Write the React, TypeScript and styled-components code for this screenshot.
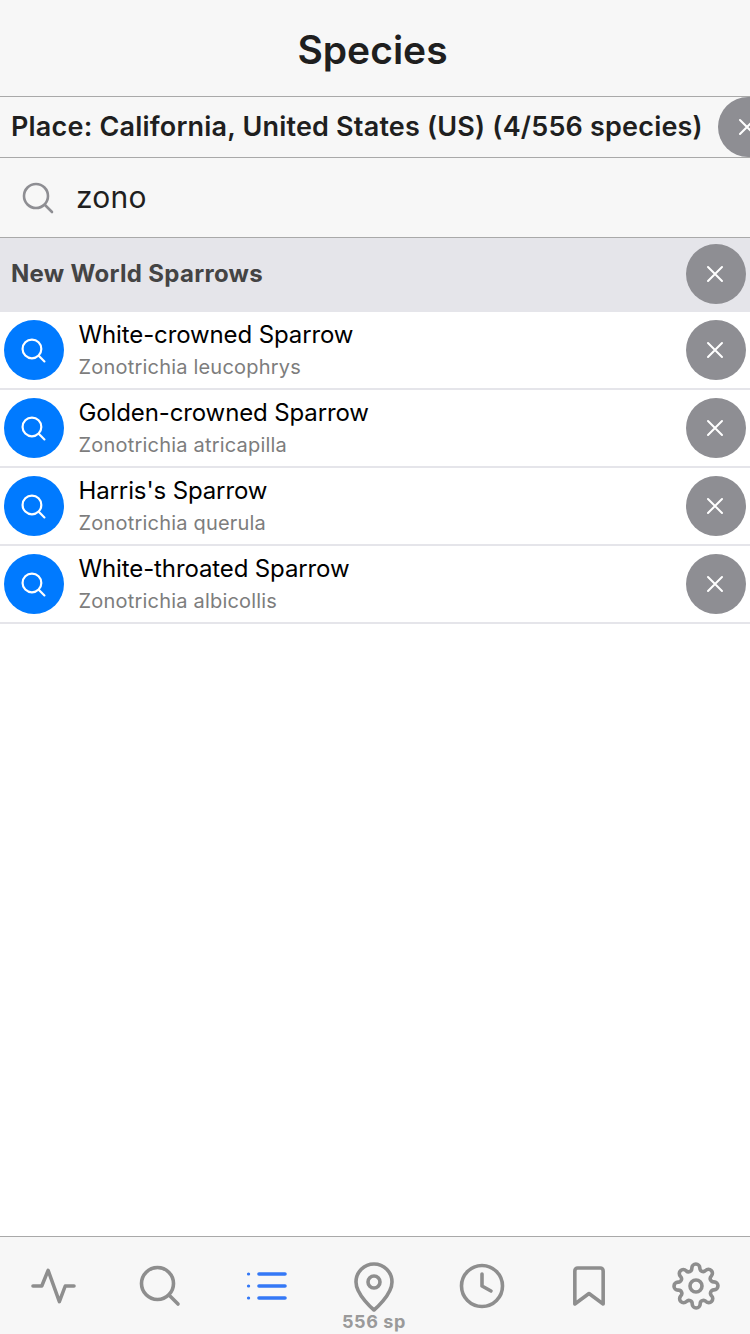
import React from "react";
import styled, { createGlobalStyle } from "styled-components";

const species = [
  { name: "White-crowned Sparrow", latin: "Zonotrichia leucophrys" },
  { name: "Golden-crowned Sparrow", latin: "Zonotrichia atricapilla" },
  { name: "Harris's Sparrow", latin: "Zonotrichia querula" },
  { name: "White-throated Sparrow", latin: "Zonotrichia albicollis" },
];

const SearchGlyph = ({ size, width }: { size: number; width: number }) => (
  <svg width={size} height={size} viewBox="0 0 32 32" fill="none" stroke="currentColor" strokeWidth={width} strokeLinecap="round">
    <circle cx="14" cy="14" r="12" />
    <path d="M23 23l7 7" />
  </svg>
);

const CloseGlyph = () => (
  <svg width="18" height="18" viewBox="0 0 18 18" fill="none" stroke="#fff" strokeWidth="2" strokeLinecap="round">
    <path d="M2 2l14 14M16 2L2 16" />
  </svg>
);

const App = () => {
  return (
    <Page>
      <GlobalStyle />
      <Header>
        <h1>Species</h1>
      </Header>
      <PlaceRow>
        <PlaceText>Place: California, United States (US) (4/556 species)</PlaceText>
        <CloseButton>
          <CloseGlyph />
        </CloseButton>
      </PlaceRow>
      <SearchRow>
        <SearchIcon>
          <SearchGlyph size={32} width={2.6} />
        </SearchIcon>
        <SearchText>zono</SearchText>
      </SearchRow>
      <Section>
        <SectionTitle>New World Sparrows</SectionTitle>
        <CloseButton>
          <CloseGlyph />
        </CloseButton>
      </Section>
      <List>
        {species.map((s) => (
          <Row key={s.latin}>
            <FindButton>
              <SearchGlyph size={25} width={2.8} />
            </FindButton>
            <Names>
              <Name>{s.name}</Name>
              <Latin>{s.latin}</Latin>
            </Names>
            <CloseButton>
              <CloseGlyph />
            </CloseButton>
          </Row>
        ))}
      </List>
      <TabBar>
        <Tab>
          <svg width="45" height="44" viewBox="0 0 46 44" fill="none" stroke="#8e8e8e" strokeWidth="3.6" strokeLinecap="round" strokeLinejoin="round">
            <path d="M2 22h9l6.500-16 11.500 32 6-16h9" />
          </svg>
        </Tab>
        <Tab>
          <svg width="42" height="42" viewBox="0 0 42 42" fill="none" stroke="#8e8e8e" strokeWidth="3.6" strokeLinecap="round">
            <circle cx="18.500" cy="18.500" r="16" />
            <path d="M30 30l9 9" />
          </svg>
        </Tab>
        <Tab>
          <svg width="42" height="30" viewBox="0 0 42 30" fill="none" stroke="#3478f6" strokeLinecap="round">
            <path strokeWidth="3.600" d="M13 3h26M13 15h26M13 27h26" />
            <path strokeWidth="3.200" d="M2.500 3h.1M2.500 15h.1M2.500 27h.1" />
          </svg>
        </Tab>
        <PinTab>
          <svg width="42" height="50" viewBox="0 0 42 50" fill="none" stroke="#8e8e8e" strokeWidth="3.6" strokeLinecap="round" strokeLinejoin="round">
            <path d="M39 20c0 13-18 28-18 28S3 33 3 20a18 18 0 0 1 36 0z" />
            <circle cx="21" cy="20" r="6" />
          </svg>
          <PinLabel>556 sp</PinLabel>
        </PinTab>
        <Tab>
          <svg width="46" height="46" viewBox="0 0 46 46" fill="none" stroke="#8e8e8e" strokeWidth="3.6" strokeLinecap="round" strokeLinejoin="round">
            <circle cx="23" cy="23" r="20.500" />
            <path d="M23 11v12l9 5" />
          </svg>
        </Tab>
        <Tab>
          <svg width="34" height="42" viewBox="0 0 36 44" fill="none" stroke="#8e8e8e" strokeWidth="3.8" strokeLinecap="round" strokeLinejoin="round">
            <path d="M33 41L18 30 3 41V6a3 3 0 0 1 3-3h24a3 3 0 0 1 3 3z" />
          </svg>
        </Tab>
        <Tab>
          <svg width="48" height="48" viewBox="0 0 24 24" fill="none" stroke="#8e8e8e" strokeWidth="1.8" strokeLinecap="round" strokeLinejoin="round">
            <circle cx="12" cy="12" r="3" />
            <path d="M19.400 15a1.650 1.650 0 0 0 .33 1.820l.06.06a2 2 0 1 1-2.830 2.830l-.06-.06a1.650 1.650 0 0 0-2.800 1.170V21a2 2 0 0 1-4 0v-.09a1.650 1.650 0 0 0-2.820-1.200l-.06.06a2 2 0 1 1-2.830-2.830l.06-.06a1.650 1.650 0 0 0-1.170-2.800H3a2 2 0 0 1 0-4h.09a1.650 1.650 0 0 0 1.200-2.820l-.06-.06a2 2 0 1 1 2.830-2.830l.06.06a1.650 1.650 0 0 0 2.800-1.170V3a2 2 0 0 1 4 0v.09a1.650 1.650 0 0 0 2.820 1.200l.06-.06a2 2 0 1 1 2.830 2.830l-.06.06a1.650 1.650 0 0 0 1.170 2.800H21a2 2 0 0 1 0 4h-.09a1.650 1.650 0 0 0-1.510 1.080z" />
          </svg>
        </Tab>
      </TabBar>
    </Page>
  );
};

export default App;

const GlobalStyle = createGlobalStyle`
  body {
    margin: 0;
    background: #fff;
    font-family: Inter, "Liberation Sans", sans-serif;
  }
`;

const Page = styled.div`
  width: 750px;
  height: 1334px;
  display: flex;
  flex-direction: column;
  overflow: hidden;
`;

const Header = styled.div`
  height: 97px;
  flex: none;
  display: flex;
  justify-content: center;
  align-items: center;
  padding: 2px 5px 0 0;
  box-sizing: border-box;
  background: #f7f7f7;
  border-bottom: 1px solid #a9a9a9;
  h1 {
    margin: 0;
    font-size: 39px;
    font-weight: 600;
    color: #1f1f1f;
  }
`;

const PlaceRow = styled.div`
  height: 60px;
  flex: none;
  display: flex;
  align-items: center;
  padding-left: 11px;
  background: #f7f7f7;
  border-bottom: 1px solid #a9a9a9;
  overflow: hidden;
`;

const PlaceText = styled.div`
  width: 707px;
  flex: none;
  margin-top: -2px;
  font-size: 27px;
  font-weight: 600;
  color: #1f1f1f;
  letter-spacing: 0.19px;
  white-space: nowrap;
`;

const SearchRow = styled.div`
  height: 79px;
  flex: none;
  display: flex;
  align-items: center;
  padding-left: 22px;
  background: #f7f7f7;
  border-bottom: 1px solid #a9a9a9;
`;

const SearchIcon = styled.div`
  width: 54px;
  display: flex;
  color: #8e8e93;
`;

const SearchText = styled.div`
  margin-top: -2px;
  font-size: 30px;
  color: #1f1f1f;
  letter-spacing: 0.2px;
`;

const Section = styled.div`
  height: 74px;
  flex: none;
  display: flex;
  align-items: center;
  justify-content: space-between;
  padding: 0 4px 2px 11px;
  box-sizing: border-box;
  background: #e5e5ea;
`;

const SectionTitle = styled.div`
  margin-top: -2px;
  font-size: 24px;
  font-weight: 650;
  color: #444;
  letter-spacing: 0.3px;
`;

const CloseButton = styled.div`
  width: 60px;
  height: 60px;
  flex: none;
  padding-right: 2px;
  box-sizing: border-box;
  border-radius: 50%;
  background: #8e8e93;
  display: flex;
  justify-content: center;
  align-items: center;
`;

const List = styled.div`
  flex: 1;
  background: #fff;
`;

const Row = styled.div`
  height: 78px;
  display: flex;
  align-items: center;
  padding: 0 4px;
  box-sizing: border-box;
  border-bottom: 2px solid #e5e5ea;
`;

const FindButton = styled.div`
  width: 60px;
  height: 60px;
  flex: none;
  padding-right: 2px;
  box-sizing: border-box;
  border-radius: 50%;
  background: #007aff;
  color: #fff;
  display: flex;
  justify-content: center;
  align-items: center;
`;

const Names = styled.div`
  flex: 1;
  margin-left: 14.5px;
  display: flex;
  flex-direction: column;
  gap: 4px;
`;

const Name = styled.div`
  font-size: 24px;
  line-height: 30px;
  color: #000;
  letter-spacing: -0.12px;
`;

const Latin = styled.div`
  font-size: 20px;
  line-height: 26px;
  color: #7d7d7d;
  letter-spacing: 0.2px;
`;

const TabBar = styled.div`
  height: 97px;
  flex: none;
  display: grid;
  grid-template-columns: repeat(7, 1fr);
  background: #f7f7f7;
  border-top: 1px solid #a9a9a9;
`;

const Tab = styled.div`
  display: flex;
  justify-content: center;
  align-items: center;
  padding: 0 1px 0 0;
`;

const PinTab = styled.div`
  display: flex;
  flex-direction: column;
  align-items: center;
  padding: 25px 2px 0 0;
`;

const PinLabel = styled.div`
  font-size: 18px;
  line-height: 20px;
  font-weight: 700;
  color: #9a9a9a;
  letter-spacing: 0.6px;
`;
